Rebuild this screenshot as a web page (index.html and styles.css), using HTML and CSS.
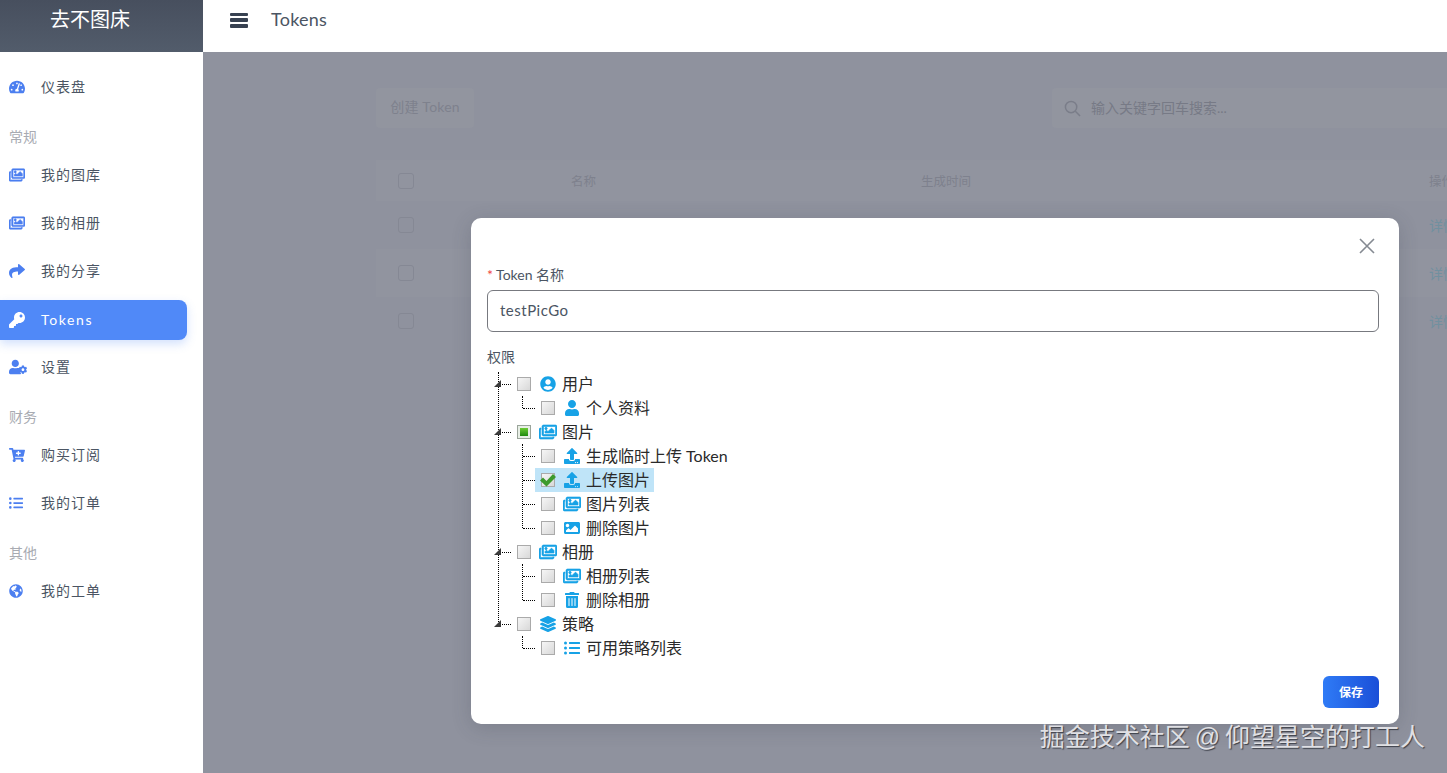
FILE: index.html
```html
<!DOCTYPE html>
<html lang="zh-CN">
<head>
<meta charset="utf-8">
<title>Tokens</title>
<link rel="stylesheet" href="styles.css">
</head>
<body>
<svg class="defs" aria-hidden="true">
  <symbol id="i-gauge" viewBox="0 0 576 512"><path d="M288 32C128.94 32 0 160.94 0 320c0 52.8 14.25 102.26 39.06 144.8 5.61 9.62 16.3 15.2 27.44 15.2h443c11.14 0 21.83-5.58 27.44-15.2C561.75 422.26 576 372.8 576 320c0-159.06-128.94-288-288-288zm0 64c14.71 0 26.58 10.13 30.32 23.65-1.11 2.26-2.64 4.23-3.45 6.67l-9.22 27.67c-5.13 3.49-10.97 6.01-17.64 6.01-17.67 0-32-14.33-32-32S270.33 96 288 96zM96 384c-17.67 0-32-14.33-32-32s14.33-32 32-32 32 14.33 32 32-14.33 32-32 32zm48-160c-17.67 0-32-14.33-32-32s14.33-32 32-32 32 14.33 32 32-14.33 32-32 32zm246.77-72.41l-61.33 184C343.13 347.33 352 364.54 352 384c0 11.72-3.38 22.55-8.88 32H232.88c-5.5-9.45-8.88-20.28-8.88-32 0-33.94 26.5-61.43 59.9-63.59l61.34-184.01c4.17-12.56 17.73-19.45 30.36-15.17 12.57 4.19 19.35 17.79 15.17 30.36zm14.66 57.2l15.52-46.55c3.47-1.29 7.13-2.23 11.05-2.23 17.67 0 32 14.33 32 32s-14.33 32-32 32c-11.38-.01-20.89-6.28-26.57-15.22zM480 384c-17.67 0-32-14.33-32-32s14.33-32 32-32 32 14.33 32 32-14.33 32-32 32z"/></symbol>
  <symbol id="i-images" viewBox="0 0 576 512"><path d="M480 416v16c0 26.51-21.49 48-48 48H48c-26.51 0-48-21.49-48-48V176c0-26.51 21.49-48 48-48h16v48H54a6 6 0 0 0-6 6v244a6 6 0 0 0 6 6h372a6 6 0 0 0 6-6v-10h48zm42-336H150a6 6 0 0 0-6 6v244a6 6 0 0 0 6 6h372a6 6 0 0 0 6-6V86a6 6 0 0 0-6-6zm6-48c26.51 0 48 21.49 48 48v256c0 26.51-21.49 48-48 48H144c-26.51 0-48-21.49-48-48V80c0-26.51 21.49-48 48-48h384zM264 144c0 22.091-17.909 40-40 40s-40-17.909-40-40 17.909-40 40-40 40 17.909 40 40zm-72 96l39.515-39.515c4.686-4.686 12.284-4.686 16.971 0L288 240l103.515-103.515c4.686-4.686 12.284-4.686 16.971 0L480 208v80H192v-48z"/></symbol>
  <symbol id="i-image" viewBox="0 0 512 512"><path d="M464 448H48c-26.51 0-48-21.49-48-48V112c0-26.51 21.49-48 48-48h416c26.51 0 48 21.49 48 48v288c0 26.51-21.49 48-48 48zM112 120c-30.928 0-56 25.072-56 56s25.072 56 56 56 56-25.072 56-56-25.072-56-56-56zM64 384h384V272l-87.515-87.515c-4.686-4.686-12.284-4.686-16.971 0L208 320l-55.515-55.515c-4.686-4.686-12.284-4.686-16.971 0L64 336v48z"/></symbol>
  <symbol id="i-share" viewBox="0 0 512 512"><path d="M503.691 189.836L327.687 37.851C312.281 24.546 288 35.347 288 56.015v80.053C127.371 137.907 0 170.1 0 322.326c0 61.441 39.581 122.309 83.333 154.132 13.653 9.931 33.111-2.533 28.077-18.631C66.066 312.814 132.917 274.316 288 272.085V360c0 20.7 24.3 31.453 39.687 18.164l176.004-152c11.071-9.562 11.086-26.753 0-36.328z"/></symbol>
  <symbol id="i-key" viewBox="0 0 512 512"><path d="M512 176.001C512 273.203 433.202 352 336 352c-11.22 0-22.19-1.062-32.827-3.069l-24.012 27.014A23.999 23.999 0 0 1 261.223 384H224v40c0 13.255-10.745 24-24 24h-40v40c0 13.255-10.745 24-24 24H24c-13.255 0-24-10.745-24-24v-78.059c0-6.365 2.529-12.47 7.029-16.971l161.802-161.802C163.108 213.814 160 195.271 160 176 160 78.798 238.797.001 335.999 0 433.488-.001 512 78.511 512 176.001zM336 128c0 26.51 21.49 48 48 48s48-21.49 48-48-21.49-48-48-48-48 21.49-48 48z"/></symbol>
  <symbol id="i-usercog" viewBox="0 0 640 512"><path d="M610.5 373.3c2.6-14.1 2.6-28.5 0-42.6l25.8-14.9c3-1.7 4.3-5.2 3.3-8.5-6.7-21.6-18.2-41.2-33.2-57.4-2.3-2.5-6-3.1-9-1.4l-25.8 14.9c-10.9-9.3-23.4-16.5-36.9-21.3v-29.8c0-3.4-2.4-6.4-5.7-7.1-22.3-5-45-4.8-66.2 0-3.3.7-5.7 3.7-5.7 7.1v29.8c-13.5 4.8-26 12-36.9 21.3l-25.8-14.9c-2.9-1.7-6.7-1.1-9 1.4-15 16.2-26.5 35.8-33.2 57.4-1 3.3.4 6.8 3.3 8.5l25.8 14.9c-2.6 14.1-2.6 28.5 0 42.6l-25.8 14.9c-3 1.7-4.3 5.2-3.3 8.5 6.7 21.6 18.2 41.1 33.2 57.4 2.3 2.5 6 3.1 9 1.4l25.8-14.9c10.9 9.3 23.4 16.5 36.9 21.3v29.8c0 3.4 2.4 6.4 5.7 7.1 22.3 5 45 4.8 66.2 0 3.3-.7 5.7-3.7 5.7-7.1v-29.8c13.5-4.8 26-12 36.9-21.3l25.8 14.9c2.9 1.7 6.7 1.1 9-1.4 15-16.2 26.5-35.8 33.2-57.4 1-3.3-.4-6.8-3.3-8.5l-25.8-14.9zM496 400.5c-26.8 0-48.5-21.8-48.5-48.5s21.8-48.5 48.5-48.5 48.5 21.8 48.5 48.5-21.7 48.5-48.5 48.5zM224 256c70.7 0 128-57.3 128-128S294.7 0 224 0 96 57.3 96 128s57.3 128 128 128zm89.6 32h-16.7c-22.2 10.2-46.9 16-72.9 16s-50.6-5.8-72.9-16h-16.7C60.2 288 0 348.2 0 422.4V464c0 26.5 21.5 48 48 48h352c14 0 26-6 35-16-20-22-36-48-44-76-6-19 2-39 19-49-2-8-2-25 0-37-12-7-24-24-18-44 2-6 0-2-18-2z"/></symbol>
  <symbol id="i-cart" viewBox="0 0 576 512"><path d="M504.717 320H211.572l6.545 32h268.418c15.401 0 26.816 14.301 23.403 29.319l-5.517 24.276C523.112 414.668 536 433.828 536 456c0 31.202-25.519 56.587-56.737 55.98-29.97-.563-54.663-24.9-55.262-54.87-.34-16.932 6.67-32.328 18.077-43.11H224.922C236.329 424.782 243.339 440.178 243 457.11c-.6 29.97-25.293 54.307-55.263 54.87C156.519 512.587 131 487.202 131 456c0-23.055 13.937-42.863 33.84-51.5L94.9 64H24C10.745 64 0 53.255 0 40V24C0 10.745 10.745 0 24 0h102.529c11.401 0 21.228 8.021 23.513 19.19L159.208 64H551.99c15.401 0 26.816 14.301 23.403 29.319l-47.273 208C525.637 312.246 515.923 320 504.717 320zM408 168h-48v-40c0-8.837-7.163-16-16-16h-16c-8.837 0-16 7.163-16 16v40h-48c-8.837 0-16 7.163-16 16v16c0 8.837 7.163 16 16 16h48v40c0 8.837 7.163 16 16 16h16c8.837 0 16-7.163 16-16v-40h48c8.837 0 16-7.163 16-16v-16c0-8.837-7.163-16-16-16z"/></symbol>
  <symbol id="i-list" viewBox="0 0 512 512"><path d="M48 48a48 48 0 1 0 48 48 48 48 0 0 0-48-48zm0 160a48 48 0 1 0 48 48 48 48 0 0 0-48-48zm0 160a48 48 0 1 0 48 48 48 48 0 0 0-48-48zm448 16H176a16 16 0 0 0-16 16v32a16 16 0 0 0 16 16h320a16 16 0 0 0 16-16v-32a16 16 0 0 0-16-16zm0-320H176a16 16 0 0 0-16 16v32a16 16 0 0 0 16 16h320a16 16 0 0 0 16-16V80a16 16 0 0 0-16-16zm0 160H176a16 16 0 0 0-16 16v32a16 16 0 0 0 16 16h320a16 16 0 0 0 16-16v-32a16 16 0 0 0-16-16z"/></symbol>
  <symbol id="i-globe" viewBox="0 0 496 512"><path d="M248 8C111.03 8 0 119.03 0 256s111.03 248 248 248 248-111.03 248-248S384.97 8 248 8zm82.29 357.6c-3.9 3.88-7.99 7.95-11.31 11.28-2.99 3-5.1 6.7-6.17 10.71-1.51 5.66-2.73 11.38-4.77 16.87l-17.39 46.85c-13.76 3-28 4.69-42.65 4.69v-27.38c1.69-12.62-7.64-36.26-22.63-51.25-6-6-9.37-14.14-9.37-22.63v-32.01c0-11.64-6.27-22.34-16.46-27.97-14.37-7.95-34.81-19.06-48.81-26.11-11.48-5.78-22.1-13.14-31.65-21.75l-.8-.72a114.792 114.792 0 0 1-18.06-20.74c-9.38-13.77-24.66-36.42-34.59-51.14 20.47-45.5 57.36-82.04 103.2-101.89l24.01 12.01C203.48 89.74 216 82.01 216 70.11v-11.3c7.99-1.29 16.12-2.11 24.39-2.42l28.3 28.3c6.25 6.25 6.25 16.38 0 22.63L264 112l-10.34 10.34c-3.12 3.12-3.12 8.19 0 11.31l4.69 4.69c3.12 3.12 3.12 8.19 0 11.31l-8 8a8.008 8.008 0 0 1-5.66 2.34h-8.99c-2.08 0-4.08.81-5.58 2.27l-9.92 9.65a8.008 8.008 0 0 0-1.58 9.31l15.59 31.19c2.66 5.32-1.21 11.58-7.15 11.58h-5.64c-1.93 0-3.79-.7-5.24-1.96l-9.28-8.06a16.017 16.017 0 0 0-15.55-3.1l-31.17 10.39a11.95 11.95 0 0 0-8.17 11.34c0 4.53 2.56 8.66 6.61 10.69l11.08 5.54c9.41 4.71 19.79 7.16 30.31 7.16s22.59 27.29 32 32h66.75c8.49 0 16.62 3.37 22.63 9.37l13.69 13.69a30.503 30.503 0 0 1 8.93 21.57 46.536 46.536 0 0 1-13.72 32.98zM417 274.25c-5.79-1.45-10.84-5-14.15-9.97l-17.98-26.97a23.97 23.97 0 0 1 0-26.62l19.59-29.38c2.32-3.47 5.5-6.29 9.24-8.15l12.98-6.49C440.2 193.59 448 223.87 448 256c0 8.67-.74 17.16-1.82 25.54L417 274.25z"/></symbol>
  <symbol id="i-usercircle" viewBox="0 0 496 512"><path d="M248 8C111 8 0 119 0 256s111 248 248 248 248-111 248-248S385 8 248 8zm0 96c48.6 0 88 39.4 88 88s-39.4 88-88 88-88-39.4-88-88 39.4-88 88-88zm0 344c-58.7 0-111.3-26.6-146.5-68.2 18.8-35.4 55.6-59.8 98.5-59.8 2.4 0 4.8.4 7.1 1.1 13 4.2 26.6 6.9 40.9 6.9 14.3 0 28-2.7 40.9-6.9 2.3-.7 4.7-1.1 7.1-1.1 42.9 0 79.7 24.4 98.5 59.8C359.3 421.4 306.7 448 248 448z"/></symbol>
  <symbol id="i-user" viewBox="0 0 448 512"><path d="M224 256c70.7 0 128-57.3 128-128S294.7 0 224 0 96 57.3 96 128s57.3 128 128 128zm89.6 32h-16.7c-22.2 10.2-46.9 16-72.9 16s-50.6-5.8-72.9-16h-16.7C60.2 288 0 348.2 0 422.4V464c0 26.5 21.5 48 48 48h352c26.5 0 48-21.5 48-48v-41.6c0-74.2-60.2-134.4-134.4-134.4z"/></symbol>
  <symbol id="i-upload" viewBox="0 0 512 512"><path d="M296 384h-80c-13.3 0-24-10.7-24-24V192h-87.7c-17.8 0-26.7-21.5-14.1-34.1L242.3 5.7c7.5-7.5 19.8-7.5 27.3 0l152.2 152.2c12.6 12.6 3.7 34.1-14.1 34.1H320v168c0 13.3-10.7 24-24 24zm216-8v112c0 13.3-10.7 24-24 24H24c-13.3 0-24-10.7-24-24V376c0-13.3 10.7-24 24-24h136v8c0 30.9 25.1 56 56 56h80c30.9 0 56-25.1 56-56v-8h136c13.3 0 24 10.7 24 24zm-124 88c0-11-9-20-20-20s-20 9-20 20 9 20 20 20 20-9 20-20zm64 0c0-11-9-20-20-20s-20 9-20 20 9 20 20 20 20-9 20-20z"/></symbol>
  <symbol id="i-trash" viewBox="0 0 448 512"><path d="M32 464a48 48 0 0 0 48 48h288a48 48 0 0 0 48-48V128H32zm272-256a16 16 0 0 1 32 0v224a16 16 0 0 1-32 0zm-96 0a16 16 0 0 1 32 0v224a16 16 0 0 1-32 0zm-96 0a16 16 0 0 1 32 0v224a16 16 0 0 1-32 0zM432 32H312l-9.4-18.7A24 24 0 0 0 281.1 0H166.8a23.72 23.72 0 0 0-21.4 13.3L136 32H16A16 16 0 0 0 0 48v32a16 16 0 0 0 16 16h416a16 16 0 0 0 16-16V48a16 16 0 0 0-16-16z"/></symbol>
  <symbol id="i-layers" viewBox="0 0 512 512"><path d="M12.41 148.02l232.94 105.67c6.8 3.09 14.49 3.09 21.29 0l232.94-105.67c16.55-7.51 16.55-32.52 0-40.03L266.65 2.31a25.607 25.607 0 0 0-21.29 0L12.41 107.98c-16.55 7.51-16.55 32.53 0 40.04zm487.18 88.28l-58.09-26.33-161.64 73.27c-7.56 3.43-15.59 5.17-23.86 5.17s-16.29-1.74-23.86-5.17L70.51 209.97l-58.1 26.33c-16.55 7.5-16.55 32.5 0 40l232.94 105.59c6.8 3.08 14.49 3.08 21.29 0L499.59 276.3c16.55-7.5 16.55-32.5 0-40zm0 127.8l-57.87-26.23-161.86 73.37c-7.56 3.43-15.59 5.17-23.86 5.17s-16.29-1.74-23.86-5.17L70.29 337.87 12.41 364.1c-16.55 7.5-16.55 32.5 0 40l232.94 105.59c6.8 3.08 14.49 3.08 21.29 0L499.59 404.1c16.55-7.5 16.55-32.5 0-40z"/></symbol>
</svg>

<div class="app">
  <aside class="sidebar">
    <div class="brand">去不图床</div>
    <nav class="nav">
      <a class="nav-item"><svg class="nav-icon"><use href="#i-gauge"/></svg>仪表盘</a>
      <div class="nav-label">常规</div>
      <a class="nav-item"><svg class="nav-icon"><use class="heavy" href="#i-images"/></svg>我的图库</a>
      <a class="nav-item"><svg class="nav-icon"><use class="heavy" href="#i-images"/></svg>我的相册</a>
      <a class="nav-item"><svg class="nav-icon"><use href="#i-share"/></svg>我的分享</a>
      <a class="nav-item active"><svg class="nav-icon"><use href="#i-key"/></svg>Tokens</a>
      <a class="nav-item"><svg class="nav-icon wide"><use href="#i-usercog"/></svg>设置</a>
      <div class="nav-label">财务</div>
      <a class="nav-item"><svg class="nav-icon"><use href="#i-cart"/></svg>购买订阅</a>
      <a class="nav-item"><svg class="nav-icon small"><use href="#i-list"/></svg>我的订单</a>
      <div class="nav-label">其他</div>
      <a class="nav-item"><svg class="nav-icon small"><use href="#i-globe"/></svg>我的工单</a>
    </nav>
  </aside>

  <div class="main">
    <header class="topbar">
      <div class="burger"><span></span><span></span><span></span></div>
      <h1 class="page-title">Tokens</h1>
    </header>
    <div class="stage">
      <div class="content">
        <div class="toolbar">
          <div class="create-btn">创建 Token</div>
          <div class="search">
            <svg class="search-icon" viewBox="0 0 18 18"><circle cx="7.5" cy="7.5" r="6"/><path d="M12 12l5 5"/></svg>
            <span>输入关键字回车搜索...</span>
          </div>
        </div>
        <div class="table">
          <div class="t-row t-head"><i class="t-check"></i><span>名称</span><span>生成时间</span><span>操作</span></div>
          <div class="t-row"><i class="t-check"></i><span></span><span></span><span class="t-link">详情</span></div>
          <div class="t-row t-alt"><i class="t-check"></i><span></span><span></span><span class="t-link">详情</span></div>
          <div class="t-row"><i class="t-check"></i><span></span><span></span><span class="t-link">详情</span></div>
        </div>
      </div>

      <div class="modal">
        <div class="modal-head">
          <svg class="close" viewBox="0 0 16 16"><path d="M1 1l14 14M15 1L1 15"/></svg>
        </div>
        <div class="field-label"><b class="req">*</b> Token 名称</div>
        <div class="input">testPicGo</div>
        <div class="field-label second">权限</div>
        <ul class="tree">
          <li>
            <div class="node root"><div class="body"><i class="cb"></i><svg class="ti"><use href="#i-usercircle"/></svg><span>用户</span></div></div>
            <ul class="kids">
              <li><div class="node"><div class="body"><i class="cb"></i><svg class="ti"><use href="#i-user"/></svg><span>个人资料</span></div></div></li>
            </ul>
          </li>
          <li>
            <div class="node root"><div class="body"><i class="cb half"></i><svg class="ti"><use class="heavy" href="#i-images"/></svg><span>图片</span></div></div>
            <ul class="kids">
              <li><div class="node"><div class="body"><i class="cb"></i><svg class="ti"><use href="#i-upload"/></svg><span>生成临时上传 Token</span></div></div></li>
              <li><div class="node"><div class="body sel"><i class="cb on"><svg viewBox="0 0 14 14"><path d="M-1 7.5L2 4.5 5.5 8 12 1l3 3L5.5 13.500z"/></svg></i><svg class="ti"><use href="#i-upload"/></svg><span>上传图片</span></div></div></li>
              <li><div class="node"><div class="body"><i class="cb"></i><svg class="ti"><use class="heavy" href="#i-images"/></svg><span>图片列表</span></div></div></li>
              <li><div class="node"><div class="body"><i class="cb"></i><svg class="ti"><use href="#i-image"/></svg><span>删除图片</span></div></div></li>
            </ul>
          </li>
          <li>
            <div class="node root"><div class="body"><i class="cb"></i><svg class="ti"><use class="heavy" href="#i-images"/></svg><span>相册</span></div></div>
            <ul class="kids">
              <li><div class="node"><div class="body"><i class="cb"></i><svg class="ti"><use class="heavy" href="#i-images"/></svg><span>相册列表</span></div></div></li>
              <li><div class="node"><div class="body"><i class="cb"></i><svg class="ti"><use href="#i-trash"/></svg><span>删除相册</span></div></div></li>
            </ul>
          </li>
          <li>
            <div class="node root"><div class="body"><i class="cb"></i><svg class="ti"><use href="#i-layers"/></svg><span>策略</span></div></div>
            <ul class="kids">
              <li><div class="node"><div class="body"><i class="cb"></i><svg class="ti"><use href="#i-list"/></svg><span>可用策略列表</span></div></div></li>
            </ul>
          </li>
        </ul>
        <div class="modal-foot"><button class="save">保存</button></div>
      </div>

      <div class="watermark">掘金技术社区 @ 仰望星空的打工人</div>
    </div>
  </div>
</div>
</body>
</html>
```
FILE: styles.css
```css
* { box-sizing: border-box; }
html, body { margin: 0; height: 100%; overflow: hidden; }
body {
  font-family: "Lato", "Noto Sans CJK SC", sans-serif;
  font-size: 14px;
  color: #4b5563;
  background: #fff;
}
.defs { display: none; }
.app { display: flex; height: 773px; }

.sidebar { width: 203px; flex: none; background: #fff; }
.brand {
  height: 52px;
  padding: 5px 73px 0 50px;
  line-height: 28px;
  font-size: 20px;
  color: #fff;
  white-space: nowrap;
  background: linear-gradient(180deg, #474f5e, #525c6b);
}
.nav { padding-top: 11px; display: flex; flex-direction: column; }
.nav-item {
  display: flex;
  align-items: center;
  height: 48px;
  width: 187px;
  padding: 0 0 2px 9px;
  letter-spacing: 1px;
  color: #4b5563;
  white-space: nowrap;
}
.nav-icon { width: 16px; height: 16px; margin: 2px 16px 0 0; fill: #4c7ff0; flex: none; }
.nav-icon.wide { width: 18px; margin-right: 14px; }
.nav-icon.small { width: 14px; height: 14px; margin-right: 18px; }
.heavy { stroke: #4c7ff0; stroke-width: 20; }
.nav-item.active {
  height: 40px;
  margin: 5px 0 3px;
  color: #fff;
  letter-spacing: 1.6px;
  background: #5089f8;
  border-radius: 0 8px 8px 0;
  box-shadow: 0 4px 10px rgba(80, 137, 248, .25);
}
.nav-item.active .nav-icon { fill: #fff; }
.nav-label {
  height: 40px;
  padding: 12px 0 0 9px;
  line-height: 28px;
  font-size: 14px;
  color: #a8abb2;
}

.main { flex: 1; min-width: 0; display: flex; flex-direction: column; }
.topbar { height: 52px; flex: none; display: flex; align-items: center; padding: 0 0 12px 27px; background: #fff; }
.burger { width: 18px; height: 15px; display: flex; flex-direction: column; justify-content: space-between; }
.burger span { height: 3.5px; background: #374151; border-radius: 1px; }
.page-title { margin: 0 0 2px 23px; font-size: 18px; font-weight: 400; color: #4b5563; letter-spacing: .25px; }

.stage { position: relative; flex: 1; background: #8f929e; overflow: hidden; }
.content { width: 1300px; padding: 36px 0 0 173px; color: #7e818d; }
.toolbar { display: flex; justify-content: space-between; height: 40px; }
.create-btn { width: 98px; height: 40px; line-height: 38px; text-align: center; letter-spacing: .2px; background: #92959f; border-radius: 4px; }
.search { width: 472px; margin-right: -21px; height: 40px; display: flex; align-items: center; padding-left: 12px; background: #92959f; border-radius: 4px; font-size: 14px; color: #777a86; }
.search span { margin-bottom: 2px; }
.search-icon { width: 17px; height: 17px; fill: none; stroke: #7a7d89; stroke-width: 1.6; margin-right: 10px; }
.table { margin-top: 32px; width: 1127px; font-size: 12.5px; }
.t-row { display: grid; grid-template-columns: 173px 350px 508px 74px; align-items: center; height: 48px; padding-left: 22px; }
.t-head { height: 41px; background: #91949f; }
.t-alt { background: #91949f; }
.t-check { width: 16px; height: 16px; border: 1px solid #858894; border-radius: 3px; }
.t-link { font-size: 14px; color: #71909f; }

.modal {
  position: absolute;
  left: 268px;
  top: 166px;
  width: 928px;
  height: 506px;
  padding: 0 20px 16px 16px;
  background: #fff;
  border-radius: 10px;
  box-shadow: 0 4px 20px rgba(50, 55, 70, .2);
  display: flex;
  flex-direction: column;
}
.modal-head { height: 47px; display: flex; justify-content: flex-end; align-items: flex-end; padding-right: 4px; padding-bottom: 11px; flex: none; }
.close { width: 16px; height: 16px; fill: none; stroke: #858a92; stroke-width: 1.6; }
.field-label { height: 20px; line-height: 19px; font-size: 14px; color: #4b5563; margin-bottom: 5px; }
.field-label.second { margin: 15px 0 5px; }
.req { font-weight: 400; color: #ef4444; }
.input { height: 42px; line-height: 38px; padding-left: 12px; border: 1px solid #77797f; border-radius: 6px; font-size: 15px; color: #4b5563; letter-spacing: .5px; }

.tree, .kids { list-style: none; margin: 0; padding: 0; position: relative; }
.tree::before { content: ""; position: absolute; left: 11px; top: 0; bottom: 36px; border-left: 1px dotted #000; }
.kids { margin-left: 24px; }
.kids::before { content: ""; position: absolute; left: 11px; top: 0; bottom: 12px; border-left: 1px dotted #000; }
.node { position: relative; height: 24px; display: flex; align-items: center; padding-left: 24px; }
.node::before { content: ""; position: absolute; left: 12px; width: 12px; top: 12px; border-top: 1px dotted #000; }
.node.root::after {
  content: "";
  position: absolute;
  left: 7px;
  top: 8px;
  border-style: solid;
  border-width: 0 0 7px 7px;
  border-color: transparent transparent #3a3a3a transparent;
}
.body { display: flex; align-items: center; height: 24px; padding: 0 4px 0 6px; font-size: 16px; color: #2a2a2a; white-space: nowrap; }
.body span { margin-bottom: 2px; }
.body.sel { background: #bfe4f8; }
.cb { display: block; position: relative; width: 14px; height: 14px; flex: none; border: 1px solid #aaa; background: linear-gradient(135deg, #f6f6f6, #d8d8d8); }
.cb.half { border-color: #9aa49a; background: #e8efe6; }
.cb.half::after { content: ""; position: absolute; inset: 2px; background: linear-gradient(#6ccb34, #1f8a10); }
.cb.on svg { position: absolute; left: -1px; top: -1px; width: 14px; height: 14px; overflow: visible; fill: #3c9a2c; }
.ti { width: 18px; height: 16px; margin: 0 5px 0 8px; fill: #17a2e6; flex: none; }
.ti .heavy { stroke: #17a2e6; }
.modal-foot { margin-top: 16px; display: flex; justify-content: flex-end; }
.save { width: 56px; height: 32px; border: 0; border-radius: 6px; padding: 0 0 2px; background: linear-gradient(90deg, #2f7bf6, #1a4fd8); color: #fff; font: 700 12px "Lato", "Noto Sans CJK SC", sans-serif; }

.watermark {
  position: absolute;
  right: 22px;
  bottom: 21px;
  font-family: "Liberation Sans", "Noto Sans CJK SC", sans-serif;
  font-size: 25px;
  line-height: 30px;
  word-spacing: -2px;
  color: #e0e0e4;
  text-shadow: 1px 1px 1px #3c3f48;
  white-space: nowrap;
}
```
